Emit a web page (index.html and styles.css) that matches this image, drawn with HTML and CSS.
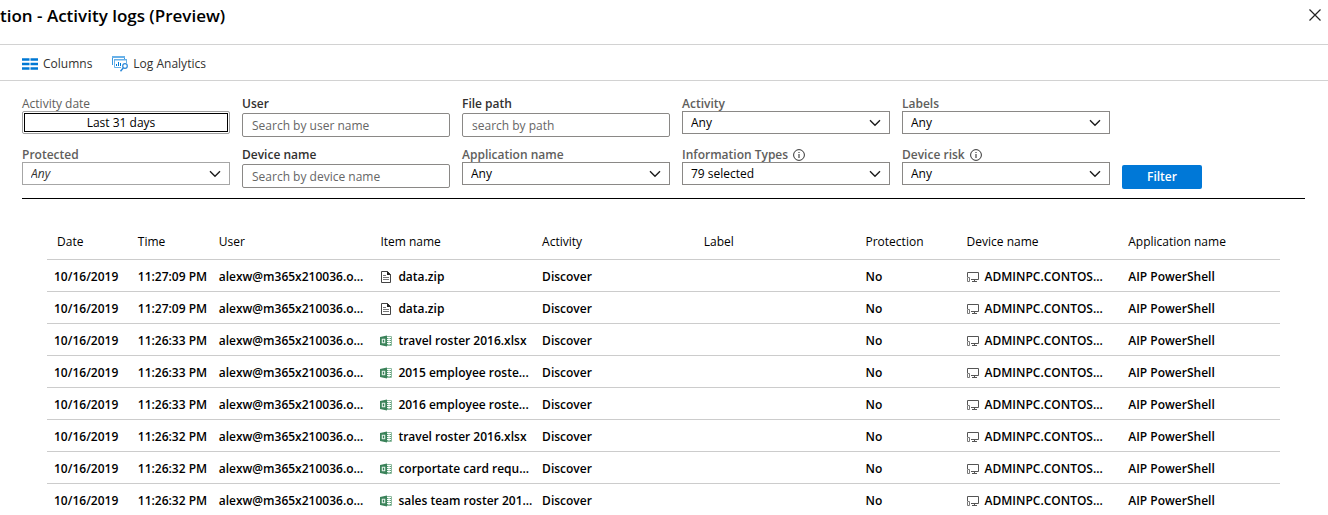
FILE: index.html
```html
<!DOCTYPE html>
<html lang="en">
<head>
<meta charset="utf-8">
<title>Activity logs (Preview)</title>
<link rel="stylesheet" href="styles.css">
</head>
<body>
<svg class="sprite" aria-hidden="true">
  <symbol id="chevron" viewBox="0 0 12 8"><path d="M1 1.200 6 6.200 11 1.200" fill="none" stroke="#1b1b1b" stroke-width="1.4"/></symbol>
  <symbol id="info" viewBox="0 0 12 12"><circle cx="6" cy="6" r="5.400" fill="none" stroke="#333"/><path d="M6 5v4M6 3v1.100" stroke="#333" stroke-width="1.1"/></symbol>
  <symbol id="doc" viewBox="0 0 12 12"><path d="M1.500.5h6l3 3v8h-9z" fill="#fff" stroke="#444"/><path d="M7 0v4h4z" fill="#222"/><path d="M3 4.500h3M3 6.500h6M3 8.500h6" stroke="#777"/></symbol>
  <symbol id="excel" viewBox="0 0 12 12"><path d="M6 1.500h5.500v9H6" fill="#fff" stroke="#8dbba0"/><path d="M7 3.500h4M7 5.500h4M7 7.500h4M7 9.500h4" stroke="#5b9f78"/><path d="M9 2v8" stroke="#fff"/><path d="M0 2 7 .500v11L0 10z" fill="#3a8259"/><path d="M2.300 4.200h2.400v3.600H2.300z" fill="none" stroke="#e8f2ec" stroke-width="1.1"/></symbol>
  <symbol id="pc" viewBox="0 0 12 12"><path d="M.5 6V1.500h11v7H4" fill="none" stroke="#555"/><path d="M7.500 8.500v2M5 10.500h5" stroke="#555"/><path d="M.5 6.500h2v4h-2z" fill="#fff" stroke="#777"/></symbol>
</svg>

<header class="title-bar">
  <h1 class="title">tion - Activity logs (Preview)</h1>
  <button class="close" type="button" aria-label="Close"><svg width="12" height="12" viewBox="0 0 12 12"><path d="M.5.5l11 11M11.500.5l-11 11" stroke="#222" stroke-width="1.2"/></svg></button>
</header>

<nav class="toolbar">
  <button class="tool" type="button">
    <svg class="tool-icon" width="16" height="16" viewBox="0 0 16 16"><path d="M0 3.500h7.500M8.500 3.500H16M0 8h7.500M8.500 8H16M0 12.500h7.500M8.500 12.500H16" stroke="#0078d4" stroke-width="2.6"/></svg>
    Columns
  </button>
  <button class="tool" type="button">
    <svg class="tool-icon" width="16" height="16" viewBox="0 0 16 16"><path d="M.5 9V.5h12V3" fill="none" stroke="#3b97de"/><path d="M0 0h13v2H0z" fill="#69b1e8"/><path d="M9 11.500H2.500v-8h12V7" fill="none" stroke="#69b1e8"/><path d="M2 3h13v1.500H2z" fill="#69b1e8"/><path d="M4.500 8v2M6.500 6v4M8.500 7v3" stroke="#0078d4"/><circle cx="13" cy="10" r="2.300" fill="#fff" stroke="#2b88d8" stroke-width="1.2"/><path d="M11.200 12 8.500 15.300" stroke="#2b88d8" stroke-width="1.500"/></svg>
    Log Analytics
  </button>
</nav>

<main class="content">
  <form class="filters">
    <div class="field">
      <label class="label label-light" for="date">Activity date</label>
      <button class="date-button" id="date" type="button">Last 31 days</button>
    </div>
    <div class="field">
      <label class="label label-dark" for="user">User</label>
      <input class="text-box" id="user" type="text" placeholder="Search by user name">
    </div>
    <div class="field">
      <label class="label label-dark" for="path">File path</label>
      <input class="text-box" id="path" type="text" placeholder="search by path">
    </div>
    <div class="field">
      <label class="label" for="activity">Activity</label>
      <div class="select-wrap"><select class="select" id="activity"><option>Any</option></select><svg class="chevron"><use href="#chevron"/></svg></div>
    </div>
    <div class="field">
      <label class="label" for="labels">Labels</label>
      <div class="select-wrap"><select class="select" id="labels"><option>Any</option></select><svg class="chevron"><use href="#chevron"/></svg></div>
    </div>
    <div class="field field-start">
      <label class="label" for="protected">Protected</label>
      <div class="select-wrap"><select class="select select-muted" id="protected"><option>Any</option></select><svg class="chevron"><use href="#chevron"/></svg></div>
    </div>
    <div class="field">
      <label class="label label-dark" for="device">Device name</label>
      <input class="text-box" id="device" type="text" placeholder="Search by device name">
    </div>
    <div class="field">
      <label class="label" for="app">Application name</label>
      <div class="select-wrap"><select class="select" id="app"><option>Any</option></select><svg class="chevron"><use href="#chevron"/></svg></div>
    </div>
    <div class="field">
      <label class="label" for="types">Information Types <svg class="info"><use href="#info"/></svg></label>
      <div class="select-wrap"><select class="select" id="types"><option>79 selected</option></select><svg class="chevron"><use href="#chevron"/></svg></div>
    </div>
    <div class="field">
      <label class="label" for="risk">Device risk <svg class="info"><use href="#info"/></svg></label>
      <div class="select-wrap"><select class="select" id="risk"><option>Any</option></select><svg class="chevron"><use href="#chevron"/></svg></div>
    </div>
    <button class="filter-button" type="submit">Filter</button>
  </form>

  <table class="log">
    <colgroup><col class="narrow"><col class="narrow"><col class="wide"><col class="wide"><col class="wide"><col class="wide"><col class="mid"><col class="wide"><col class="wide"></colgroup>
    <thead>
      <tr><th>Date</th><th>Time</th><th>User</th><th>Item name</th><th>Activity</th><th>Label</th><th>Protection</th><th>Device name</th><th>Application name</th></tr>
    </thead>
    <tbody>
      <tr><td>10/16/2019</td><td>11:27:09 PM</td><td>alexw@m365x210036.o...</td><td><svg class="icon"><use href="#doc"/></svg>data.zip</td><td>Discover</td><td></td><td>No</td><td><svg class="icon"><use href="#pc"/></svg>ADMINPC.CONTOS...</td><td>AIP PowerShell</td></tr>
      <tr><td>10/16/2019</td><td>11:27:09 PM</td><td>alexw@m365x210036.o...</td><td><svg class="icon"><use href="#doc"/></svg>data.zip</td><td>Discover</td><td></td><td>No</td><td><svg class="icon"><use href="#pc"/></svg>ADMINPC.CONTOS...</td><td>AIP PowerShell</td></tr>
      <tr><td>10/16/2019</td><td>11:26:33 PM</td><td>alexw@m365x210036.o...</td><td><svg class="icon"><use href="#excel"/></svg>travel roster 2016.xlsx</td><td>Discover</td><td></td><td>No</td><td><svg class="icon"><use href="#pc"/></svg>ADMINPC.CONTOS...</td><td>AIP PowerShell</td></tr>
      <tr><td>10/16/2019</td><td>11:26:33 PM</td><td>alexw@m365x210036.o...</td><td><svg class="icon"><use href="#excel"/></svg>2015 employee roste...</td><td>Discover</td><td></td><td>No</td><td><svg class="icon"><use href="#pc"/></svg>ADMINPC.CONTOS...</td><td>AIP PowerShell</td></tr>
      <tr><td>10/16/2019</td><td>11:26:33 PM</td><td>alexw@m365x210036.o...</td><td><svg class="icon"><use href="#excel"/></svg>2016 employee roste...</td><td>Discover</td><td></td><td>No</td><td><svg class="icon"><use href="#pc"/></svg>ADMINPC.CONTOS...</td><td>AIP PowerShell</td></tr>
      <tr><td>10/16/2019</td><td>11:26:32 PM</td><td>alexw@m365x210036.o...</td><td><svg class="icon"><use href="#excel"/></svg>travel roster 2016.xlsx</td><td>Discover</td><td></td><td>No</td><td><svg class="icon"><use href="#pc"/></svg>ADMINPC.CONTOS...</td><td>AIP PowerShell</td></tr>
      <tr><td>10/16/2019</td><td>11:26:32 PM</td><td>alexw@m365x210036.o...</td><td><svg class="icon"><use href="#excel"/></svg>corportate card requ...</td><td>Discover</td><td></td><td>No</td><td><svg class="icon"><use href="#pc"/></svg>ADMINPC.CONTOS...</td><td>AIP PowerShell</td></tr>
      <tr><td>10/16/2019</td><td>11:26:32 PM</td><td>alexw@m365x210036.o...</td><td><svg class="icon"><use href="#excel"/></svg>sales team roster 201...</td><td>Discover</td><td></td><td>No</td><td><svg class="icon"><use href="#pc"/></svg>ADMINPC.CONTOS...</td><td>AIP PowerShell</td></tr>
    </tbody>
  </table>
</main>
</body>
</html>
```
FILE: styles.css
```css
* { box-sizing: border-box; }

body {
  margin: 0;
  background: #fff;
  color: #000;
  font: 12px/16px "Segoe UI", "Open Sans", "Noto Sans", sans-serif;
}

button, input, select { font: inherit; color: inherit; margin: 0; }
button { cursor: pointer; }

.sprite { display: none; }

.title-bar {
  display: flex;
  justify-content: space-between;
  align-items: flex-start;
  height: 45px;
  padding: 4px 7px 0 0;
  border-bottom: 1px solid #d2d2d2;
}

.title { margin: 0; font-size: 17px; line-height: 24px; font-weight: 600; }

.close { display: flex; padding: 5px 0; border: 0; background: none; }

.toolbar {
  display: flex;
  align-items: center;
  gap: 20px;
  height: 36px;
  padding: 2px 22px 0;
  border-bottom: 1px solid #d2d2d2;
}

.tool {
  display: flex;
  align-items: center;
  gap: 5px;
  padding: 0;
  border: 0;
  background: none;
  color: #323130;
}

.content { padding: 14px 23px 0 22px; }

.filters {
  display: grid;
  grid-template-columns: repeat(5, 208px) 80px;
  gap: 12px;
  align-items: start;
  padding-bottom: 13px;
  border-bottom: 1px solid #000;
}

.field { height: 39px; }
.field-start { grid-column: 1; }

.label {
  display: flex;
  align-items: center;
  gap: 5px;
  height: 16px;
  padding-top: 2px;
  color: #605e5c;
  font-weight: 600;
}
.label-light { font-weight: 400; }
.label-dark { color: #323130; }

.info { width: 12px; height: 12px; }

.text-box {
  display: block;
  width: 100%;
  height: 24px;
  margin-top: 2px;
  padding: 0 9px;
  border: 1px solid #8a8886;
  border-radius: 2px;
}
.text-box::placeholder { color: #666; opacity: 1; }

.date-button {
  display: block;
  width: 100%;
  height: 23px;
  padding: 0 10px 0 0;
  border: 1px solid #a0a0a0;
  border-radius: 2px;
  outline: 1px solid #000;
  outline-offset: -3px;
  background: #fff;
}

.select-wrap { display: grid; align-items: center; }

.select {
  grid-area: 1 / 1;
  appearance: none;
  width: 100%;
  height: 23px;
  padding: 0 28px 0 8px;
  border: 1px solid #8a8886;
  border-radius: 0;
  background: #fff;
}
.select-muted { border-color: #a6a6a6; color: #323130; font-style: italic; }

.chevron {
  grid-area: 1 / 1;
  justify-self: end;
  width: 12px;
  height: 8px;
  margin-right: 9px;
  pointer-events: none;
}

.filter-button {
  height: 24px;
  margin-top: 19px;
  margin-bottom: -4px;
  padding: 0;
  border: 0;
  border-radius: 2px;
  background: #0078d7;
  color: #fff;
  font-weight: 600;
}

.log {
  width: calc(100% - 50px);
  margin: 27px 25px 0;
  table-layout: fixed;
  border-collapse: collapse;
}
.narrow { width: 80px; }
.mid { width: 100px; }
.wide { width: 160px; }

.log th, .log td {
  height: 32px;
  padding: 3px 0 0 10px;
  border-bottom: 1px solid #ccc;
  text-align: left;
  white-space: nowrap;
  overflow: hidden;
}
.log th { height: 33px; padding-top: 0; font-weight: 400; }
.log td { font-weight: 600; }
.log td:first-child { padding-left: 7px; }

.icon {
  width: 12px;
  height: 12px;
  margin-right: 6px;
  vertical-align: -2px;
}
```
